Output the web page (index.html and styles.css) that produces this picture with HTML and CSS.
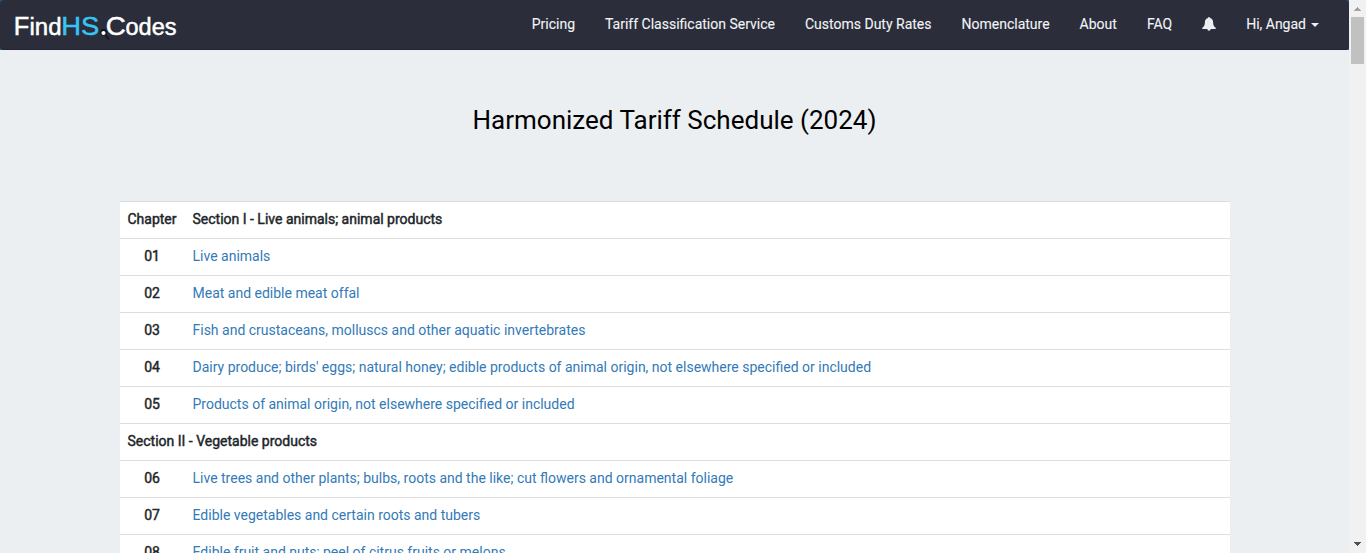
FILE: index.html
```html
<!DOCTYPE html>
<html lang="en">
<head>
<meta charset="utf-8">
<title>Harmonized Tariff Schedule (2024)</title>
<link rel="stylesheet" href="styles.css">
</head>
<body>
<div class="page">
  <div class="content">
    <div class="nav-wrap">
      <nav class="navbar">
        <a class="brand" aria-label="FindHS.Codes">
          <svg width="170" height="34" viewBox="0 0 170 34">
            <text class="logo-text logo-big" x="3.800" y="27" textLength="15.500" lengthAdjust="spacingAndGlyphs">F</text>
            <text class="logo-text" x="19.500" y="27" textLength="32" lengthAdjust="spacingAndGlyphs">ind</text>
            <text class="logo-text logo-big logo-blue" x="51.300" y="27" textLength="38" lengthAdjust="spacingAndGlyphs">HS</text>
            <path d="M95.500 27l3.500 4.500" stroke="#15151c" stroke-width="1.800"/>
            <circle cx="93.500" cy="24.300" r="3.300" fill="#111118"/>
            <circle cx="93.500" cy="25" r="2.100" fill="#fff"/>
            <text class="logo-text logo-big" x="95.800" y="27" textLength="20" lengthAdjust="spacingAndGlyphs">C</text>
            <text class="logo-text" x="115.500" y="27" textLength="51" lengthAdjust="spacingAndGlyphs">odes</text>
          </svg>
        </a>
        <div class="nav-links">
          <a>Pricing</a><a>Tariff Classification Service</a><a>Customs Duty Rates</a><a>Nomenclature</a><a>About</a><a>FAQ</a>
          <a class="bell"><svg width="14" height="14" viewBox="0 0 14 14"><path fill="#ebeff2" d="M6 1a1 1 0 0 1 2 0c2 .4 3 2 3.100 4 .1 3 .6 4.600 2.600 5.800V12H.3v-1.200C2.300 9.600 2.800 8 2.900 5 3 3 4 1.400 6 1zM5.300 12h3.400a1.700 1.700 0 0 1-3.400 0z"/></svg></a>
          <a>Hi, Angad<span class="caret"></span></a>
        </div>
      </nav>
    </div>
    <h1>Harmonized Tariff Schedule (2024)</h1>
    <table class="schedule">
      <tr><th class="chapter">Chapter</th><th>Section I - Live animals; animal products</th></tr>
      <tr><td class="chapter">01</td><td><a>Live animals</a></td></tr>
      <tr><td class="chapter">02</td><td><a>Meat and edible meat offal</a></td></tr>
      <tr><td class="chapter">03</td><td><a>Fish and crustaceans, molluscs and other aquatic invertebrates</a></td></tr>
      <tr><td class="chapter">04</td><td><a>Dairy produce; birds' eggs; natural honey; edible products of animal origin, not elsewhere specified or included</a></td></tr>
      <tr><td class="chapter">05</td><td><a>Products of animal origin, not elsewhere specified or included</a></td></tr>
      <tr><th colspan="2">Section II - Vegetable products</th></tr>
      <tr><td class="chapter">06</td><td><a>Live trees and other plants; bulbs, roots and the like; cut flowers and ornamental foliage</a></td></tr>
      <tr><td class="chapter">07</td><td><a>Edible vegetables and certain roots and tubers</a></td></tr>
      <tr><td class="chapter">08</td><td><a>Edible fruit and nuts; peel of citrus fruits or melons</a></td></tr>
    </table>
  </div>
  <div class="scrollbar">
    <svg class="arrow" width="17" height="17" viewBox="0 0 17 17" shape-rendering="crispEdges"><path fill="#a3a3a3" d="M8 7h1v1h1v1h1v1h1v1H5v-1h1V9h1V8h1z"/></svg>
    <div class="thumb"></div>
    <svg class="arrow arrow-down" width="17" height="17" viewBox="0 0 17 17" shape-rendering="crispEdges"><path fill="#505050" d="M5 6h7v1h-1v1h-1v1H9v1H8V9H7V8H6V7H5z"/></svg>
  </div>
</div>
</body>
</html>
```
FILE: styles.css
```css
* { box-sizing: border-box; }
body {
  margin: 0;
  background: #ebeff2;
  font-family: Roboto, "Liberation Sans", sans-serif;
  font-size: 14px;
  line-height: 20px;
  color: #212529;
}
.page { display: flex; height: 553px; overflow: hidden; }
.content { flex: 1; min-width: 0; overflow: hidden; }
.nav-wrap { background: #1b5f96; }
.navbar {
  display: flex;
  justify-content: space-between;
  height: 50px;
  padding: 0 15px 0 10px;
  background: #2b2d3a;
  border-bottom: 1px solid #242530;
  border-radius: 4px;
}
.brand { padding-top: 8px; }
.brand svg { display: block; }
.logo-text { font-family: "Liberation Sans", Arial, sans-serif; font-size: 23.500px; fill: #fff; stroke: #fff; stroke-width: .5px; }
.logo-big { font-size: 26.500px; }
.logo-blue { fill: #36c5f4; stroke: #36c5f4; }
.nav-links { display: flex; }
.nav-links a { padding: 14px 15px; color: #f1f4f6; -webkit-text-stroke: .1px #f1f4f6; white-space: nowrap; }
.bell svg { display: block; margin-top: 3px; }
.caret {
  display: inline-block;
  margin-left: 5px;
  vertical-align: middle;
  border-top: 4px solid #ebeff2;
  border-left: 4px solid transparent;
  border-right: 4px solid transparent;
}
h1 {
  margin: 54px 0 65px;
  font-size: 26px;
  line-height: 32px;
  font-weight: 400;
  text-align: center;
  color: #000;
}
.schedule { width: 1110px; margin: 0 0 0 120px; border-collapse: collapse; background: #fff; }
.schedule th, .schedule td { height: 37px; padding: 7px 7.500px 9px; border-top: 1px solid #ddd; text-align: left; }
.schedule th { font-weight: 400; -webkit-text-stroke: .45px #212529; }
.schedule .chapter { width: 65px; padding-left: 7px; padding-right: 8px; text-align: center; -webkit-text-stroke: .45px #212529; }
.schedule a { color: #337ab7; }
.scrollbar { display: flex; flex-direction: column; width: 17px; background: #f1f1f1; }
.arrow { display: block; flex: none; }
.thumb { width: 13px; height: 47px; margin: 0 2px; background: #c1c1c1; }
.arrow-down { margin-top: auto; }
```
